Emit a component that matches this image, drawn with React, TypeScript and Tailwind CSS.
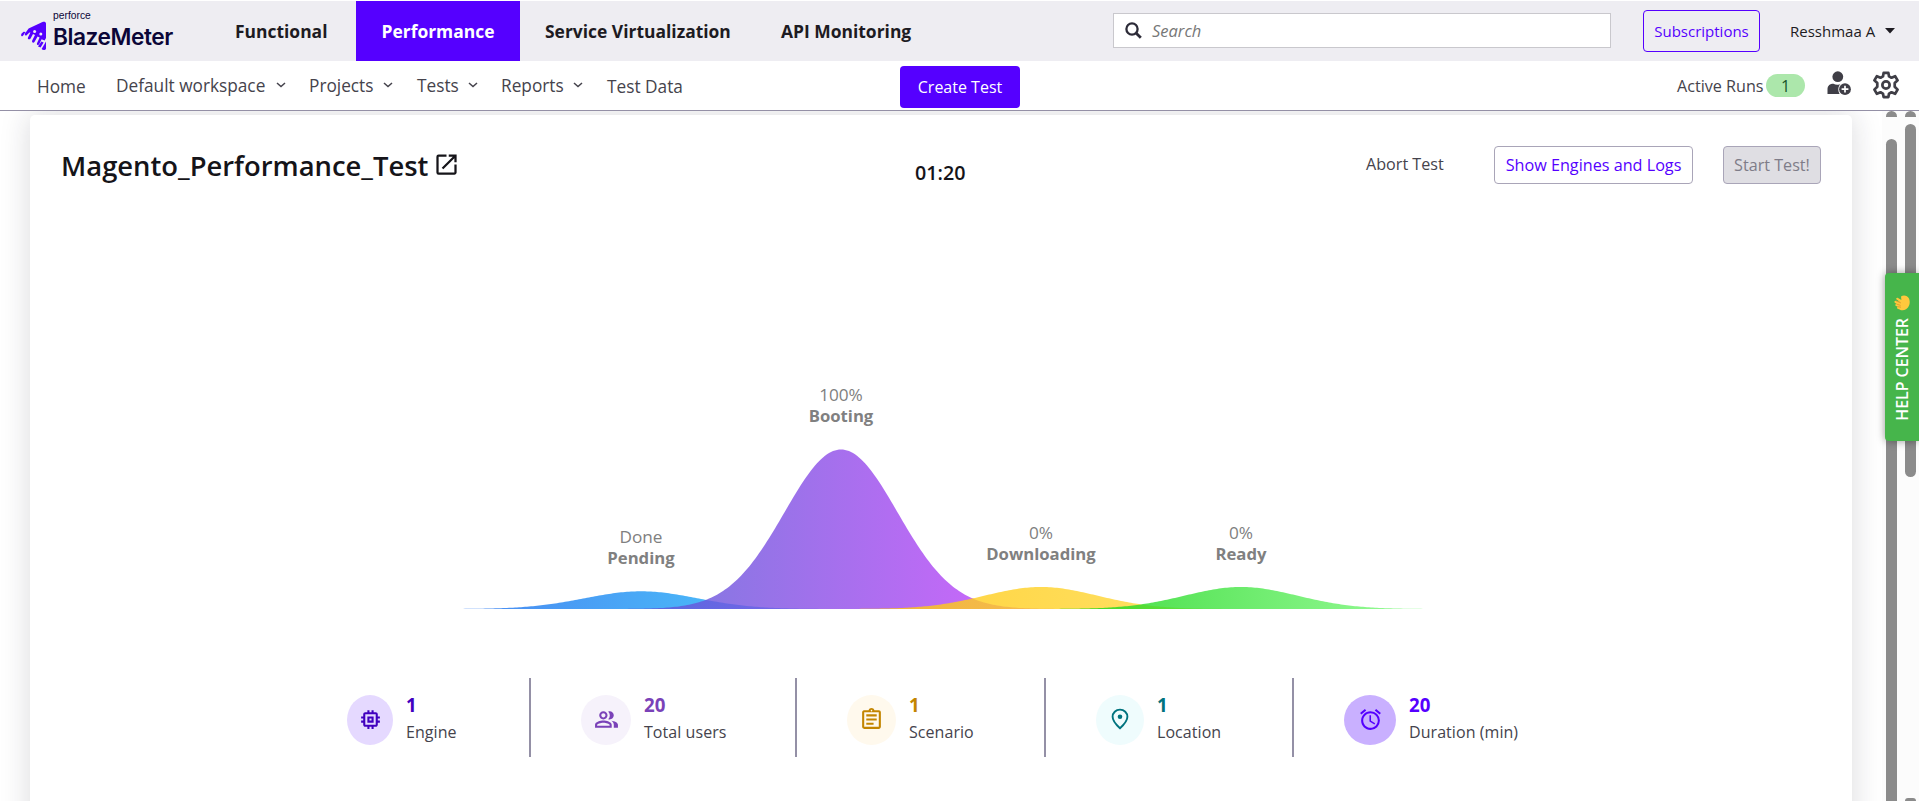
import type { ReactNode } from "react";
import {
  MdAlarm,
  MdOpenInNew,
  MdOutlineAssignment,
  MdOutlineMemory,
  MdOutlinePeopleAlt,
} from "react-icons/md";

function Logo() {
  return (
    <div className="flex w-[189px] shrink-0 pl-[21px]">
      <svg width="26" height="30" viewBox="0 0 26 30" className="mt-[21px] shrink-0" fill="#5500ff">
        <path d="M21.5 1 C23 .4 25 .8 25 2.5 V17 L23.6 19.6 L20.6 18.2 L18.2 23.2 C17.4 24.6 15.4 24 16 22.2 L18.6 16.4 L16.6 15.4 L13.6 20.8 C12.6 22.4 10.4 21.6 11.2 19.6 L14 14 L12 13 L9.6 17.4 C8.6 19 6.2 18.4 7 16.4 L9.4 11.6 C8 10.8 7 13.4 5.4 14.4 C4 15 3.4 13.6 4 12.6 L7.6 7.6 Z" />
        <path d="M4.8 11 C3.4 12 2.6 14.6 1.4 15.2 C0 15.4 -.2 13.6 .6 12.6 L2.6 10.8 Z" />
        <path d="M25 20.4 V27.4 C24.6 29.4 21.6 29.4 20.6 28 Z" />
        <path d="M20.4 20.4 L22.6 21.4 L19.6 26.6 L17 25.4 Z" />
        <g fill="#eeedf2">
          <circle cx="13.6" cy="10.4" r="1.5" />
          <circle cx="19.8" cy="13" r="1.5" />
        </g>
      </svg>
      <div className="ml-1.5 flex flex-col text-[#0b0638]">
        <span className="mt-[10px] font-['Liberation_Sans',sans-serif] text-[10.3px] leading-3">perforce</span>
        <span className="font-['Inter',sans-serif] text-[22.7px] font-semibold leading-[30px] tracking-[-0.45px]">
          BlazeMeter
        </span>
      </div>
    </div>
  );
}

function Chevron() {
  return (
    <svg width="10" height="6" viewBox="0 0 10 6" className="mb-px shrink-0" fill="none" stroke="#45434c" strokeWidth="1.5">
      <path d="M1 1 L5 4.6 L9 1" />
    </svg>
  );
}

function MenuItem({ label, width }: { label: string; width: string }) {
  return (
    <div className={"flex shrink-0 items-center justify-between " + width}>
      <span>{label}</span>
      <Chevron />
    </div>
  );
}

function UserPlus() {
  return (
    <svg width="25" height="25" viewBox="0 0 25 25" className="shrink-0">
      <g fill="#3f3e46">
        <circle cx="10.8" cy="5.7" r="5.4" />
        <path d="M0.5 23 V18.5 C.5 14.5 3 12.8 6.5 12.8 C8.6 14.2 12 14.2 13.6 12.8 C11 15.5 10.6 19.5 12.6 23 Z" />
        <circle cx="18" cy="18.2" r="5.9" />
      </g>
      <path d="M18 14.8 V21.6 M14.6 18.2 H21.4" stroke="#fff" strokeWidth="1.7" />
    </svg>
  );
}

function Gear() {
  return (
    <svg width="28" height="28" viewBox="0 0 27 27" className="shrink-0" fill="none" stroke="#3f3e46" strokeWidth="2.6" strokeLinejoin="round">
      <path d="M11.2 1.8 H15.8 L16.4 5.2 L18.8 6.5 L22.3 5 L24.7 9 L21.9 11.6 V15.2 L24.7 18 L22.3 22 L18.8 20.5 L16.4 21.8 L15.8 25.2 H11.2 L10.6 21.8 L8.2 20.5 L4.7 22 L2.3 18 L5.1 15.2 V11.6 L2.3 9 L4.7 5 L8.2 6.5 L10.6 5.2 Z" />
      <circle cx="13.5" cy="13.5" r="3.5" />
    </svg>
  );
}

function Pin() {
  return (
    <svg width="18" height="22" viewBox="0 0 18 22" fill="none">
      <path d="M9 1.6 C4.8 1.6 1.6 4.8 1.6 8.8 C1.6 13 5.6 17.2 9 20.2 C12.4 17.2 16.4 13 16.4 8.8 C16.4 4.8 13.2 1.6 9 1.6 Z" stroke="#00737e" strokeWidth="1.9" />
      <circle cx="9" cy="8.8" r="2.3" fill="#00737e" />
    </svg>
  );
}

const BASE = 249;
const SIGMA = 56.5;

function bell(center: number, height: number) {
  const pts: string[] = [];
  for (let d = -230; d <= 230; d += 2) {
    const y = BASE - Math.max(height * Math.exp((-d * d) / (2 * SIGMA * SIGMA)), 0.08);
    pts.push(`${center + d} ${y.toFixed(2)}`);
  }
  return `M${center - 230} ${BASE} L${pts.join(" L")} L${center + 230} ${BASE} Z`;
}

const stages = [
  { id: "pending", name: "Pending", value: "Done", x: 231, top: 183, height: 17.7, from: "#1d60ec", to: "#1ac7fc" },
  { id: "booting", name: "Booting", value: "100%", x: 431, top: 41, height: 159.5, from: "#515ad3", to: "#d03dff" },
  { id: "downloading", name: "Downloading", value: "0%", x: 631, top: 179, height: 22, from: "#ffc400", to: "#ffdd4a" },
  { id: "ready", name: "Ready", value: "0%", x: 831, top: 179, height: 22, from: "#00cd00", to: "#8eff8e" },
];

function StageChart() {
  return (
    <svg width="1072" height="252" viewBox="0 0 1072 252" className="ml-[380px] shrink-0">
      <defs>
        {stages.map((s) => (
          <linearGradient key={s.id} id={s.id} x1="0" x2="1" y1="0" y2="0">
            <stop offset="0" stopColor={s.from} />
            <stop offset="1" stopColor={s.to} />
          </linearGradient>
        ))}
      </defs>
      {stages.map((s) => (
        <path key={s.id} d={bell(s.x, s.height)} fill={`url(#${s.id})`} fillOpacity="0.8" />
      ))}
      {stages.map((s) => (
        <g key={s.id} fill="#808080" textAnchor="middle">
          <text x={s.x} y={s.top} className="text-[17.2px]">{s.value}</text>
          <text x={s.x} y={s.top + 21} className="text-[16.7px] font-bold">{s.name}</text>
        </g>
      ))}
    </svg>
  );
}

function Stat(props: { icon: ReactNode; value: string; label: string; width: string; circle: string; tone: string }) {
  return (
    <div className={"flex h-[79px] shrink-0 items-start " + props.width}>
      <div className={"mt-[17px] flex h-[50px] shrink-0 items-center justify-center rounded-[50%] pb-0.5 " + props.circle}>
        {props.icon}
      </div>
      <div className="ml-[13px] flex flex-col whitespace-nowrap">
        <span className={"mt-[14px] text-[18.7px] font-bold leading-[26px] " + props.tone}>{props.value}</span>
        <span className="mt-px text-base leading-[26px] tracking-[0.06px] text-[#45434c]">{props.label}</span>
      </div>
    </div>
  );
}

function Divider({ className }: { className: string }) {
  return <div className={"h-[79px] w-0.5 shrink-0 bg-[#9490a6] " + className} />;
}

function Hand() {
  return (
    <svg width="18" height="18" viewBox="0 0 18 18">
      <path
        d="M8 2.4 C10.5 .6 14.5 1.4 16 4.4 C17.6 8 16.6 13 13 15.2 C10.6 16.8 8.2 16.4 6.6 15.4 L4.6 14.8 C3.6 14.2 4 12.8 5 12.8 L3 12 C1.8 11.4 2.2 9.8 3.6 10 L1.9 8.8 C.8 8 1.6 6.4 3 6.8 L7 8 L3.6 5.6 C2.6 4.6 3.8 3.2 5 4 L8.4 6 Z"
        fill="#ffc83d"
      />
      <path d="M4.8 12.7 L8 13.2 M3.4 10 L7.6 11.4 M3 6.9 L8 9" stroke="#d9972c" strokeWidth=".8" fill="none" />
    </svg>
  );
}

export default function App() {
  return (
    <div className="flex h-[801px] w-[1919px] flex-col overflow-hidden bg-white font-['Open_Sans',sans-serif] text-[#45434c]">
      <header className="mt-px flex h-[60px] shrink-0 items-stretch bg-[#eeedf2] text-[#1d1b22]">
        <div className="-mt-px flex">
          <Logo />
        </div>
        <nav className="flex whitespace-nowrap text-[17.45px] font-bold">
          <div className="flex w-[167px] items-center pl-[46px]">Functional</div>
          <div className="flex w-[164px] items-center justify-center bg-[#5500ff] text-white">Performance</div>
          <div className="flex w-[237px] items-center pl-[25px]">Service Virtualization</div>
          <div className="flex w-[356px] items-center pl-6">API Monitoring</div>
        </nav>
        <div className="mt-3 flex h-[35px] w-[498px] shrink-0 items-center border border-[#c9c8cd] bg-white">
          <svg width="17" height="17" viewBox="0 0 17 17" className="ml-[11px]" fill="none" stroke="#2c2b38">
            <circle cx="7" cy="7" r="5.6" strokeWidth="2.3" />
            <path d="M11 11 L15.8 15.8" strokeWidth="2.8" />
          </svg>
          <span className="ml-[10px] pt-0.5 text-[16.5px] italic text-[#777]">Search</span>
        </div>
        <div className="ml-8 mt-[9px] flex h-[42px] w-[117px] shrink-0 items-center justify-center rounded border border-[#5500ff] text-[15px] text-[#5500ff]">
          Subscriptions
        </div>
        <div className="ml-[30px] flex items-center whitespace-nowrap text-[15px]">
          Resshmaa A
          <svg width="10" height="6" viewBox="0 0 10 6" className="ml-[10px]" fill="#1d1b22">
            <path d="M0 0 H10 L5 5.6 Z" />
          </svg>
        </div>
      </header>

      <div className="flex h-[50px] shrink-0 items-center whitespace-nowrap border-b border-[#9490a6] text-[17.25px]">
        <span className="ml-[37px] w-[79px] shrink-0 pt-0.5">Home</span>
        <MenuItem label="Default workspace" width="w-[170px]" />
        <MenuItem label="Projects" width="ml-[23px] w-[84px]" />
        <MenuItem label="Tests" width="ml-[24px] w-[61px]" />
        <MenuItem label="Reports" width="ml-[23px] w-[82px]" />
        <span className="ml-[24px] w-[293px] shrink-0 pt-0.5">Test Data</span>
        <div className="mt-[3px] flex h-[42px] w-[120px] shrink-0 items-center justify-center rounded bg-[#5500ff] text-base font-normal text-white">
          Create Test
        </div>
        <span className="ml-[657px] w-[89px] shrink-0 pt-px text-[16.15px] font-normal">Active Runs</span>
        <div className="flex h-[23px] w-[39px] shrink-0 items-center justify-center rounded-full bg-[#ace7ab] text-base font-normal text-[#17552b]">
          1
        </div>
        <div className="ml-[22px] flex w-[45px] shrink-0 pb-1">
          <UserPlus />
        </div>
        <div className="pb-0.5">
          <Gear />
        </div>
      </div>

      <div className="flex min-h-0 flex-1 overflow-hidden">
        <div className="flex w-[1882px] shrink-0 overflow-hidden pl-[30px] pt-1">
          <main className="flex h-[760px] w-[1822px] flex-col rounded-[5px] bg-white shadow-[0_0_30px_rgba(30,28,50,0.17)]">
            <div className="flex h-[262px] shrink-0 items-start whitespace-nowrap">
              <h1 className="ml-[31px] mt-[31px] w-[374px] text-[27.4px] font-semibold leading-[40px] text-[#151419]">
                Magento_Performance_Test
              </h1>
              <MdOpenInNew className="-ml-0.5 mt-[36px] size-[27px] shrink-0 text-[#151419]" />
              <span className="ml-[455px] mt-[43px] w-[451px] text-[19.7px] font-semibold leading-[30px] text-[#151419]">01:20</span>
              <span className="mt-[37px] w-[128px] text-[16.15px] leading-6">Abort Test</span>
              <div className="mt-[31px] flex h-[38px] w-[199px] items-center justify-center rounded border border-[#a9a5b8] text-[16.2px] text-[#5500ff]">
                Show Engines and Logs
              </div>
              <div className="ml-[30px] mt-[31px] flex h-[38px] w-[98px] items-center justify-center rounded border border-[#a9a5b8] bg-[#dfdee3] text-[16.15px] text-[#7e7c88]">
                Start Test!
              </div>
            </div>
            <div className="-mt-[17px] flex">
              <StageChart />
            </div>
            <div className="ml-[317px] mt-[66px] flex">
              <Stat icon={<MdOutlineMemory className="size-[25px] text-[#4100bf]" />} value="1" label="Engine" width="w-[182px]" circle="w-[46px] bg-[#e5d9ff]" tone="text-[#4100bf]" />
              <Divider className="mr-[50px]" />
              <Stat icon={<MdOutlinePeopleAlt className="size-[25px] text-[#7a42b8]" />} value="20" label="Total users" width="w-[214px]" circle="w-[50px] bg-[#f6f2fb]" tone="text-[#7a42b8]" />
              <Divider className="mr-[50px]" />
              <Stat icon={<MdOutlineAssignment className="size-[25px] text-[#c38500]" />} value="1" label="Scenario" width="w-[197px]" circle="w-[49px] bg-[#fff9ed]" tone="text-[#c38500]" />
              <Divider className="mr-[50px]" />
              <Stat icon={<Pin />} value="1" label="Location" width="w-[196px]" circle="w-[48px] bg-[#effcfd]" tone="text-[#00737e]" />
              <Divider className="mr-[50px]" />
              <Stat icon={<MdAlarm className="size-[25px] text-[#5500ff]" />} value="20" label="Duration (min)" width="w-[190px]" circle="w-[52px] bg-[#c9b0ff]" tone="text-[#5500ff]" />
            </div>
          </main>
        </div>
        <div className="relative flex w-[37px] shrink-0 bg-[#fcfcfc] pl-1">
          <div className="flex w-[11px] flex-col">
            <div className="h-1.5 w-[11px] rounded-t-full bg-[#8b8b8b]" />
            <div className="mt-[22px] flex-1 rounded-t-full bg-[#8b8b8b]" />
          </div>
          <div className="ml-2 flex w-[11px] flex-col">
            <div className="h-1.5 w-[11px] rounded-t-full bg-[#8b8b8b]" />
            <div className="mt-[7px] h-[353px] rounded-full bg-[#8b8b8b]" />
            <div className="mt-auto h-[3px] rounded-t-sm bg-[#8b8b8b]" />
          </div>
          <div className="absolute right-0 top-[162px] flex h-[168px] w-[34px] flex-col items-center rounded-l bg-[#46b54b] shadow-[0_0_8px_rgba(0,0,0,0.4)]">
            <div className="mt-[21px]">
              <Hand />
            </div>
            <span className="mt-[6px] rotate-180 whitespace-nowrap text-[15.9px] font-semibold leading-[22px] text-white [writing-mode:vertical-rl]">
              HELP CENTER
            </span>
          </div>
        </div>
      </div>
    </div>
  );
}
